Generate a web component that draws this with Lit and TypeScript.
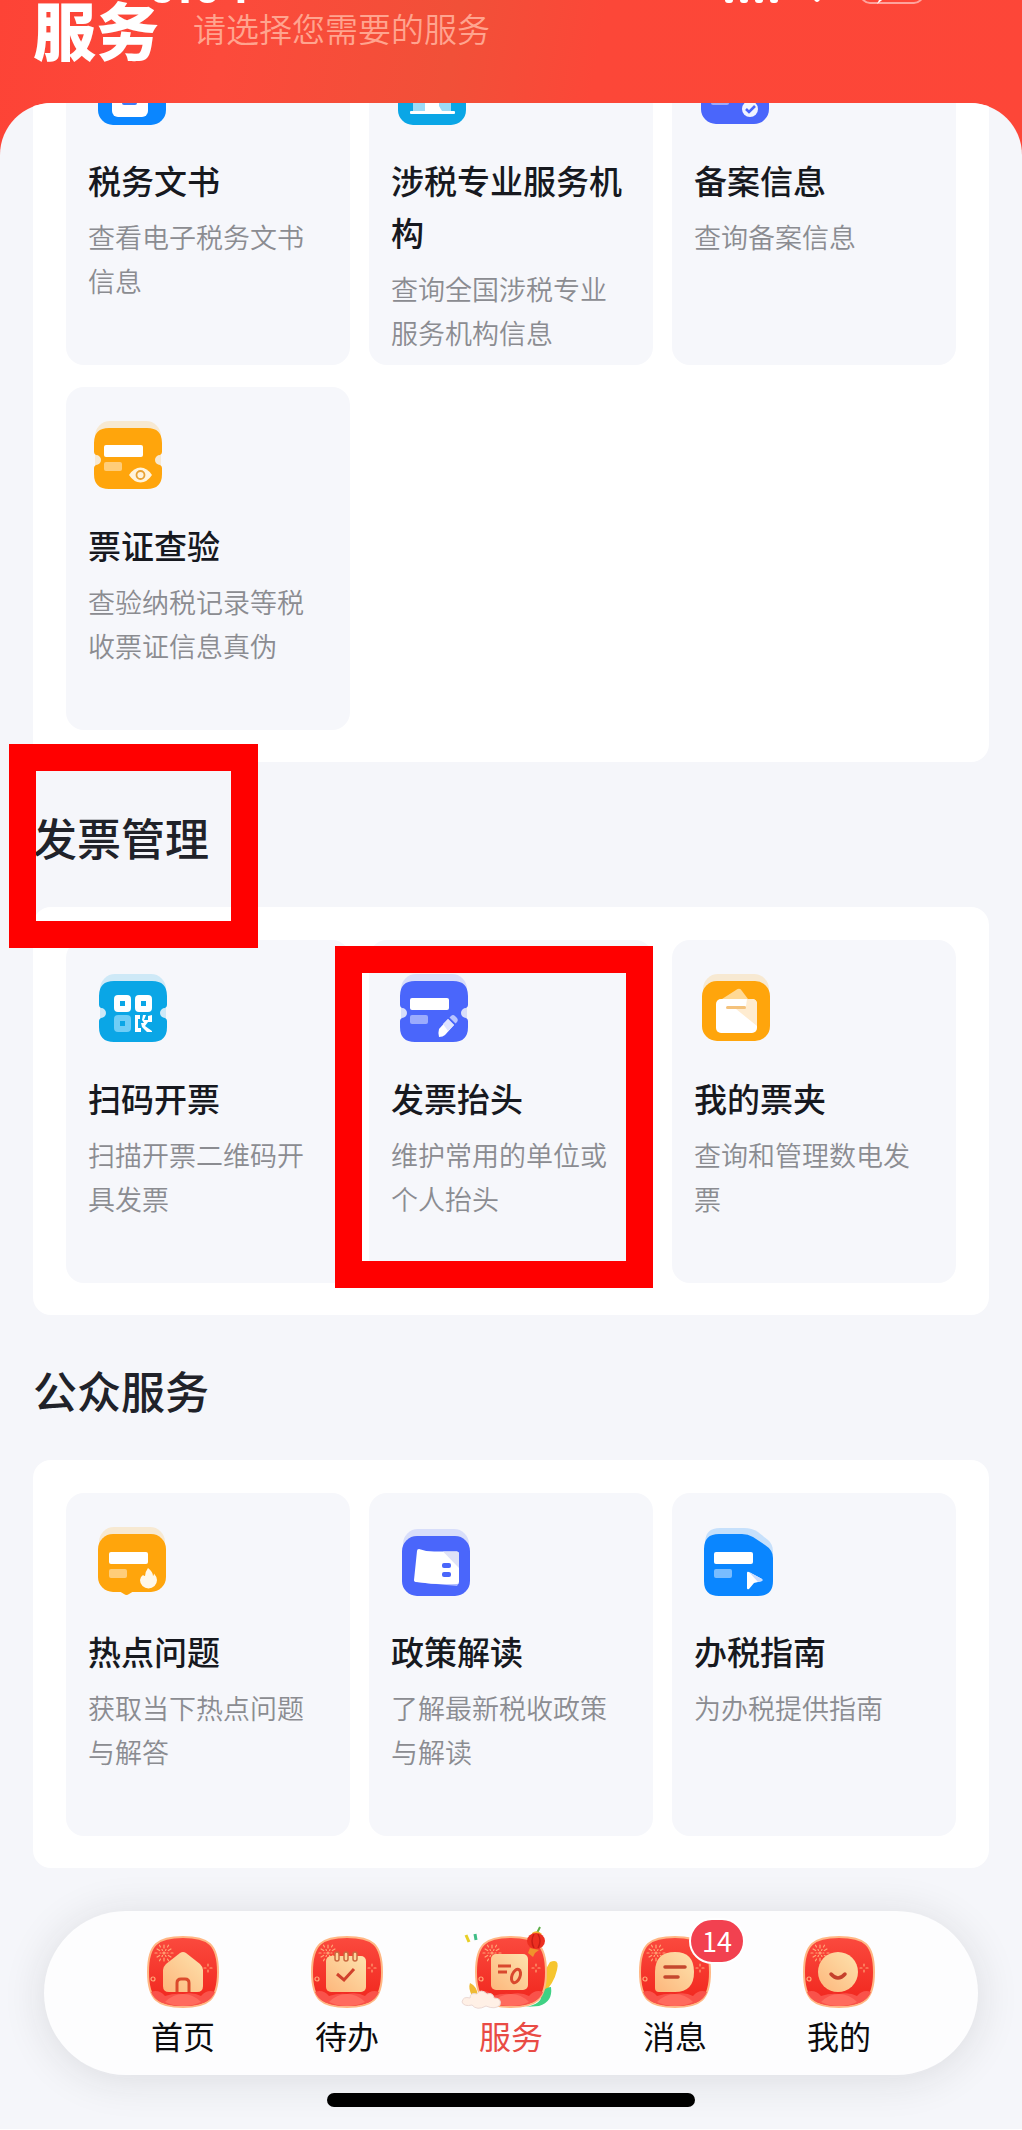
import { LitElement, html, svg, css, nothing, type TemplateResult } from "lit";
import { customElement, property } from "lit/decorators.js";
import { classMap } from "lit/directives/class-map.js";

interface Service {
  icon: string;
  title: string;
  desc: string;
  marked?: boolean;
}

interface Section {
  title: string;
  marked?: boolean;
  services: Service[];
}

const RECENT: Service[] = [
  { icon: "document", title: "税务文书", desc: "查看电子税务文书信息" },
  { icon: "agency", title: "涉税专业服务机构", desc: "查询全国涉税专业服务机构信息" },
  { icon: "record", title: "备案信息", desc: "查询备案信息" },
  { icon: "verify", title: "票证查验", desc: "查验纳税记录等税收票证信息真伪" },
];

const SECTIONS: Section[] = [
  {
    title: "发票管理",
    marked: true,
    services: [
      { icon: "scan", title: "扫码开票", desc: "扫描开票二维码开具发票" },
      { icon: "header", title: "发票抬头", desc: "维护常用的单位或个人抬头", marked: true },
      { icon: "wallet", title: "我的票夹", desc: "查询和管理数电发票" },
    ],
  },
  {
    title: "公众服务",
    services: [
      { icon: "hot", title: "热点问题", desc: "获取当下热点问题与解答" },
      { icon: "policy", title: "政策解读", desc: "了解最新税收政策与解读" },
      { icon: "guide", title: "办税指南", desc: "为办税提供指南" },
    ],
  },
];

const TABS = [
  { icon: "home", label: "首页" },
  { icon: "todo", label: "待办" },
  { icon: "service", label: "服务", active: true },
  { icon: "message", label: "消息", badge: 14 },
  { icon: "mine", label: "我的" },
];

const ORANGE = "#ffa50c";
const INDIGO = "#4a66fb";
const BLUE = "#0a86ff";
const CYAN = "#0aa6e6";

/* Rounded ticket with a notch in the middle of each side */
const ticket = (x: number, color: string) => {
  const r = x + 68;
  const d = `M${x + 15} 9H${r - 15}Q${r} 9 ${r} 24V33Q${r} 35 ${r - 2} 36A5 5 0 0 0 ${r - 2} 46Q${r} 47 ${r} 49V55Q${r} 70 ${r - 15} 70H${x + 15}Q${x} 70 ${x} 55V49Q${x} 47 ${x + 2} 46A5 5 0 0 0 ${x + 2} 36Q${x} 35 ${x} 33V24Q${x} 9 ${x + 15} 9Z`;
  return svg`
    <rect x=${x + 1} y="2" width="66" height="60" rx="15" fill=${color} opacity=".17"/>
    <path d=${d} fill=${color}/>`;
};

const tile = (x: number, y: number, color: string, h = 60) => svg`
  <rect x=${x + 1} y=${y - 7} width="66" height="50" rx="15" fill=${color} opacity=".17"/>
  <rect x=${x} y=${y} width="68" height=${h} rx="15" fill=${color}/>`;

const lines = (x: number) => svg`
  <rect x=${x} y="26" width="39" height="12" rx="2" fill="#fff"/>
  <rect x=${x} y="43" width="18" height="9" rx="2" fill="#fff" opacity=".45"/>`;

const SERVICE_ICONS: Record<string, TemplateResult> = {
  document: svg`
    ${tile(6, 11, BLUE)}
    <rect x="20" y="22" width="36" height="41" rx="6" fill="#fff"/>
    <rect x="30" y="44" width="15" height="7" rx="2" fill="#3c7df5"/>`,
  agency: svg`
    ${tile(3, 11, CYAN)}
    <path d="M18 30L37 20L56 30V57H18Z" fill="#9cdcf8"/>
    <path d="M30 57V36H44V52L47 57Z" fill="#fff"/>
    <rect x="15" y="57" width="45" height="3" rx="1" fill="#fff"/>`,
  record: svg`
    ${tile(3, 10, INDIGO)}
    <rect x="13" y="26" width="39" height="12" rx="2" fill="#fff"/>
    <rect x="13" y="43" width="18" height="8" rx="2" fill="#fff" opacity=".45"/>
    <circle cx="52" cy="55" r="8" fill="#f1f4ff"/>
    <path d="M48 55L51 58L57 52" fill="none" stroke=${INDIGO} stroke-width="2.6"/>`,
  verify: svg`
    ${ticket(2, ORANGE)}${lines(12)}
    <path d="M37 56Q42 48.500 48.500 48.500T60 56Q55 63.500 48.500 63.500T37 56Z" fill="#fff4dc"/>
    <circle cx="48.500" cy="56" r="4" fill="#fff4dc" stroke="#e8a234" stroke-width="1.800"/>`,
  scan: svg`
    ${ticket(7, CYAN)}
    <rect x="25" y="26" width="11" height="11" rx="1" fill="none" stroke="#fff" stroke-width="6"/>
    <rect x="46" y="26" width="11" height="11" rx="1" fill="none" stroke="#fff" stroke-width="6"/>
    <rect x="25" y="46" width="11" height="11" rx="1" fill="none" stroke="#6fcdf6" stroke-width="6"/>
    <path d="M43 43H48V47H46V56H49V60H43ZM51 43H54L52 48H56V44L60 43V50H56L53 54L60 59V60H55L50 55L49 51H52L50 48Z" fill="#fff"/>`,
  header: svg`
    ${ticket(5, INDIGO)}${lines(15)}
    <path d="M44 57L53 47L59 53L50 63Q48 65 44 65Q43 60 44 57Z" fill="#fff"/>
    <path d="M48 52L53 47L59 53L53 59Z" fill="#dfe4ff"/>
    <path d="M54.500 45.500L56 44Q58 42 60 44L62 46Q63.500 48 62 50L60.500 51.500Z" fill="#b9c4ff"/>`,
  wallet: svg`
    ${tile(4, 9, ORANGE)}
    <path d="M24 27L38 18Q42 15 44 19L50 27Z" fill="#ffd995"/>
    <rect x="18" y="27" width="41" height="34" rx="5" fill="#fff"/>
    <path d="M38 37L48 34L49 27H54Q59 27 59 32V54Z" fill="#ffecd0"/>
    <rect x="28" y="34" width="20" height="3" rx="1.500" fill="#f4c27c"/>`,
  hot: svg`
    <g transform="translate(0 1)">
      ${tile(6, 8, ORANGE, 58)}
      <path d="M27 65H42L37 68Q34.500 70 32 68Z" fill=${ORANGE}/>
      ${lines(17)}
      <path d="M56 42Q61 46 61 50Q62 49 62 47.500Q65 51 65 54A8.500 8.500 0 1 1 48 54Q48 51 51 49Q52 50 53 50Q53 46 56 42Z" fill="#fff8ea"/>
    </g>`,
  policy: svg`
    <g transform="translate(0 1)">
      ${tile(7, 10, INDIGO)}
      <path d="M19 54L20 56L62 60L64 57Z" fill="#a9b6ff"/>
      <path d="M22 25Q22 23 24 23Q32 26 42 25.500L62 25.500Q64 25.500 64 28V56Q64 58 62 58Q40 59 22 56Q19 56 19 54Z" fill="#fff"/>
      <path d="M48 25.500H62Q64 25.500 64 28V42Z" fill="#dfe2f7"/>
      <rect x="47" y="37" width="9" height="5" rx="2" fill=${INDIGO}/>
      <rect x="47" y="46" width="9" height="5" rx="2" fill=${INDIGO}/>
    </g>`,
  guide: svg`
    <g transform="translate(0 1)">
      <path d="M22 2H46Q54 2 60 6L70 14Q75 18 75 26V50H7V17Q7 2 22 2Z" fill=${BLUE} opacity=".2"/>
      <path d="M21 8H44Q50 8 55 11L67 19Q75 24 75 32V55Q75 70 60 70H21Q6 70 6 55V23Q6 8 21 8Z" fill=${BLUE}/>
      ${lines(16)}
      <path d="M49 47Q49 45 51 46L64 53Q65 54 64 55L56 57L51 63Q49 64 49 62Z" fill="#fff"/>
      <path d="M51 46L64 53Q65 54 64 55L60 56Z" fill="#c9dcff"/>
    </g>`,
};

const RAYS = [0, 30, 60, 90, 120, 150, 180, 210, 240, 270, 300, 330];

const festive = (id: string) => svg`
  <defs>
    <linearGradient id="${id}-bg" x1="0" y1="0" x2="0" y2="1">
      <stop offset="0" stop-color="#fb4a3e"/><stop offset="1" stop-color="#f0241b"/>
    </linearGradient>
    <linearGradient id="${id}-gold" x1="0" y1="1" x2="1" y2="0">
      <stop offset="0" stop-color="#fdb67b"/><stop offset="1" stop-color="#fde3ae"/>
    </linearGradient>
  </defs>
  <path d="M36 1C61 1 71 8 71 36S61 71 36 71S1 64 1 36S11 1 36 1Z" fill="url(#${id}-bg)" stroke="#ffb784" stroke-width="2"/>
  <g stroke="#ffa878" stroke-width="1.200" stroke-linecap="round" fill="none">
    ${RAYS.map(
      (a) => svg`<path d=${a % 60 ? "M17 14V13M17 10V8" : "M17 12V9"} transform="rotate(${a} 17 17)"/>`
    )}
    <circle cx="17" cy="17" r="1"/>
    <path d="M61 28V30M61 34V36M57 32H59M63 32H65"/>
    <circle cx="6" cy="43" r="2"/>
  </g>
  <path d="M4 56Q12 53 18 60Q27 57 36 58Q47 56 54 60Q60 53 68 56Q63 70 36 70T4 56Z" fill="#f9524a"/>
  <path d="M18 66Q26 58 36 58T54 66Q46 70 36 70T18 66Z" fill="#ff6b5e"/>`;

const TAB_ICONS: Record<string, TemplateResult> = {
  home: svg`
    ${festive("home")}
    <path d="M33 17Q36 15 39 17L53 28Q56 31 56 34V50Q56 56 50 56H22Q16 56 16 50V34Q16 31 19 28Z" fill="url(#home-gold)"/>
    <path d="M30 56V47Q30 43 34 43H38Q42 43 42 47V56" fill="none" stroke="#dc4a2c" stroke-width="3"/>`,
  todo: svg`
    ${festive("todo")}
    <rect x="15" y="20" width="40" height="36" rx="5" fill="url(#todo-gold)"/>
    <g fill="#fdd49c" stroke="#c9673f" stroke-width="1.500">
      <rect x="24" y="16" width="4" height="9" rx="2"/><rect x="33" y="16" width="4" height="9" rx="2"/><rect x="42" y="16" width="4" height="9" rx="2"/>
    </g>
    <path d="M26 38L33 44L43 33" fill="none" stroke="#d0402c" stroke-width="3"/>`,
  service: svg`
    <path d="M67 59Q65 40 75 26Q85 22 82 34Q79 48 67 59Z" fill="#f6c52f"/>
    <path d="M50 71Q68 68 66 58Q70 51 76 51Q78 66 64 70Z" fill="#3fd184"/>
    <path d="M-5 47Q2 50 3 60L-3 60Q-7 52 -5 47Z" fill="#f0bb35"/>
    ${festive("service")}
    <rect x="16" y="18" width="37" height="36" rx="5" fill="url(#service-gold)"/>
    <path d="M23 30H36M23 36H32" stroke="#d9482e" stroke-width="3"/>
    <ellipse cx="41" cy="40" rx="4" ry="7" transform="rotate(22 41 40)" fill="none" stroke="#d9482e" stroke-width="3"/>
    <path d="M62 -3L65 -9" stroke="#5cae49" stroke-width="2"/>
    <path d="M57 -3Q62 -7 67 -2L65 0H58Z" fill="#f4ad2f"/>
    <ellipse cx="61" cy="5" rx="9" ry="8" fill="#ec2f20"/>
    <path d="M59 -2Q55 5 59 12M63 -2Q67 5 63 12" stroke="#c71d16" stroke-width="1.500" fill="none"/>
    <path d="M55 12L64 14L60 17L58 21L53 17Z" fill="#f0932c"/>
    <path d="M-9 -1L-6 6" stroke="#e8cf27" stroke-width="3"/>
    <path d="M0 -2L1 4" stroke="#41bd87" stroke-width="3"/>
    <path d="M-13 66Q-12 60 -5 62Q-5 56 2 58Q6 52 12 58Q18 56 19 62Q27 62 25 69Q20 74 11 70Q2 75 -3 69Q-11 71 -13 66Z" fill="#fff0e6" stroke="#ecd9d4"/>`,
  message: svg`
    ${festive("message")}
    <path d="M36 16Q55 16 55 36T36 56H20Q16 56 16 52V36Q16 16 36 16Z" fill="url(#message-gold)"/>
    <path d="M26 31H46M26 41H39" stroke="#c5482e" stroke-width="3.500" stroke-linecap="round"/>`,
  mine: svg`
    ${festive("mine")}
    <circle cx="35" cy="36" r="20" fill="url(#mine-gold)"/>
    <path d="M28 38Q35 46 42 38" fill="none" stroke="#c5402c" stroke-width="3.500" stroke-linecap="round"/>`,
};

@customElement("service-card")
export class ServiceCard extends LitElement {
  @property({ attribute: false }) service!: Service;

  static styles = css`
    :host { display: block; position: relative; }
    .card {
      box-sizing: border-box;
      display: block;
      height: 100%;
      min-height: 343px;
      padding: 32px 22px 8px;
      border-radius: 18px;
      background: #f6f7fb;
      text-decoration: none;
    }
    .icon { display: block; width: 76px; height: 76px; margin: 0 0 24px 4px; overflow: visible; }
    .title { margin: 0 0 9px; font-size: 33px; line-height: 52px; font-weight: 500; color: #17191f; }
    .desc { margin: 0; font-size: 27px; line-height: 44px; font-weight: 350; color: #8b8c91; }
    .mark { position: absolute; inset: 6px 0 -5px -34px; border: 27px solid #ff0000; pointer-events: none; }
  `;

  render() {
    const { icon, title, desc, marked } = this.service;
    return html`
      <a class="card" href="#${icon}">
        <svg class="icon" viewBox="0 0 76 76" aria-hidden="true">${SERVICE_ICONS[icon]}</svg>
        <h3 class="title">${title}</h3>
        <p class="desc">${desc}</p>
      </a>
      ${marked ? html`<div class="mark"></div>` : nothing}
    `;
  }
}

@customElement("tab-bar")
export class TabBar extends LitElement {
  static styles = css`
    :host { display: block; }
    .bar {
      display: flex;
      padding: 25px 57px 16px;
      border-radius: 82px;
      background: #fdfdfe;
      box-shadow: 0 4px 44px rgba(30, 30, 30, 0.12);
    }
    .tab {
      position: relative;
      flex: 1;
      display: flex;
      flex-direction: column;
      align-items: center;
      gap: 3px;
      color: #0b0b0d;
      font-size: 32px;
      line-height: 48px;
      text-decoration: none;
    }
    .active { color: #e94b45; }
    .icon { width: 72px; height: 72px; overflow: visible; }
    .badge {
      position: absolute;
      top: -18px;
      left: calc(50% + 14px);
      box-sizing: border-box;
      min-width: 56px;
      border: 2px solid #fff;
      border-radius: 24px;
      background: #f24150;
      color: #fff;
      font-size: 27px;
      line-height: 42px;
      text-align: center;
    }
  `;

  render() {
    return html`
      <nav class="bar" aria-label="主导航">
        ${TABS.map(
          (t) => html`
            <a class=${classMap({ tab: true, active: !!t.active })} href="#${t.icon}">
              <svg class="icon" viewBox="0 0 72 72" aria-hidden="true">${TAB_ICONS[t.icon]}</svg>
              <span>${t.label}</span>
              ${t.badge ? html`<span class="badge">${t.badge}</span>` : nothing}
            </a>
          `
        )}
      </nav>
    `;
  }
}

@customElement("app-root")
export class AppRoot extends LitElement {
  static styles = css`
    :host {
      display: block;
      background: #f5f6fa;
      font-family: "Noto Sans CJK SC", "Noto Sans", sans-serif;
    }
    .header {
      position: relative;
      display: flex;
      align-items: flex-start;
      gap: 34px;
      overflow: hidden;
      padding: 0 33px 99px;
      background: linear-gradient(100deg, #fd4336 0%, #fc4a3b 22%, #f15038 44%, #fc4738 58%, #fd4638 100%);
    }
    .heading { margin: 0; font-size: 63px; line-height: 56px; font-weight: 900; color: #fff; }
    .hint { margin: 0; font-size: 33px; line-height: 56px; font-weight: 350; color: #ffa48f; }
    .status {
      position: absolute;
      top: -36px;
      right: 96px;
      left: 149px;
      display: flex;
      justify-content: space-between;
      align-items: flex-end;
      height: 42px;
      color: #fff;
      font-family: "Liberation Sans", sans-serif;
      font-size: 50px;
      line-height: 40px;
      font-weight: 700;
    }
    .signals { width: 202px; height: 42px; }
    .sheet {
      position: relative;
      overflow: hidden;
      margin-top: -52px;
      padding: 0 33px 43px;
      border-radius: 52px 52px 0 0;
      background: #f5f6fa;
    }
    .panel {
      display: grid;
      grid-template-columns: repeat(3, minmax(0, 1fr));
      gap: 22px 19px;
      padding: 33px 33px 32px;
      border-radius: 18px;
      background: #fff;
    }
    .scrolled { margin-top: -114px; }
    .caption { position: relative; z-index: 1; padding: 49px 0 44px; }
    .caption-title { margin: 0; font-size: 44px; line-height: 52px; font-weight: 500; color: #202229; }
    .mark {
      position: absolute;
      inset: -18px auto -41px -24px;
      box-sizing: border-box;
      width: 249px;
      border: 27px solid #ff0000;
      pointer-events: none;
    }
    .foot { position: relative; padding-bottom: 22px; }
    .dock { padding: 0 44px; }
    .indicator { width: 36%; height: 14px; margin: 18px auto 0; border-radius: 7px; background: #000; position: relative; }
  `;

  private panel(services: Service[], scrolled = false) {
    return html`
      <div class=${classMap({ panel: true, scrolled })}>
        ${services.map((s) => html`<service-card .service=${s}></service-card>`)}
      </div>
    `;
  }

  render() {
    return html`
      <div class="page" lang="zh-CN">
        <header class="header">
          <h1 class="heading">服务</h1>
          <p class="hint">请选择您需要的服务</p>
          <div class="status">
            <span>9:04</span>
            <svg class="signals" viewBox="0 0 202 42" aria-hidden="true">
              <g fill="#fff">
                <rect x="1" y="28" width="8" height="11" rx="3"/>
                <rect x="16" y="22" width="8" height="17" rx="3"/>
                <rect x="31" y="16" width="8" height="23" rx="3"/>
                <rect x="46" y="10" width="8" height="29" rx="3"/>
                <path d="M82 26Q93 18 104 26L95 37Q93 39 91 37Z"/>
                <path d="M161 24L153 40L166 30Z"/>
              </g>
              <rect x="137" y="12" width="62" height="27" rx="9" fill="none" stroke="#fff" stroke-opacity=".5" stroke-width="2"/>
            </svg>
          </div>
        </header>
        <main class="sheet">
          ${this.panel(RECENT, true)}
          ${SECTIONS.map(
            (s) => html`
              <section>
                <div class="caption">
                  <h2 class="caption-title">${s.title}</h2>
                  ${s.marked ? html`<div class="mark"></div>` : nothing}
                </div>
                ${this.panel(s.services)}
              </section>
            `
          )}
        </main>
        <footer class="foot">
          <div class="dock"><tab-bar></tab-bar></div>
          <div class="indicator"></div>
        </footer>
      </div>
    `;
  }
}
